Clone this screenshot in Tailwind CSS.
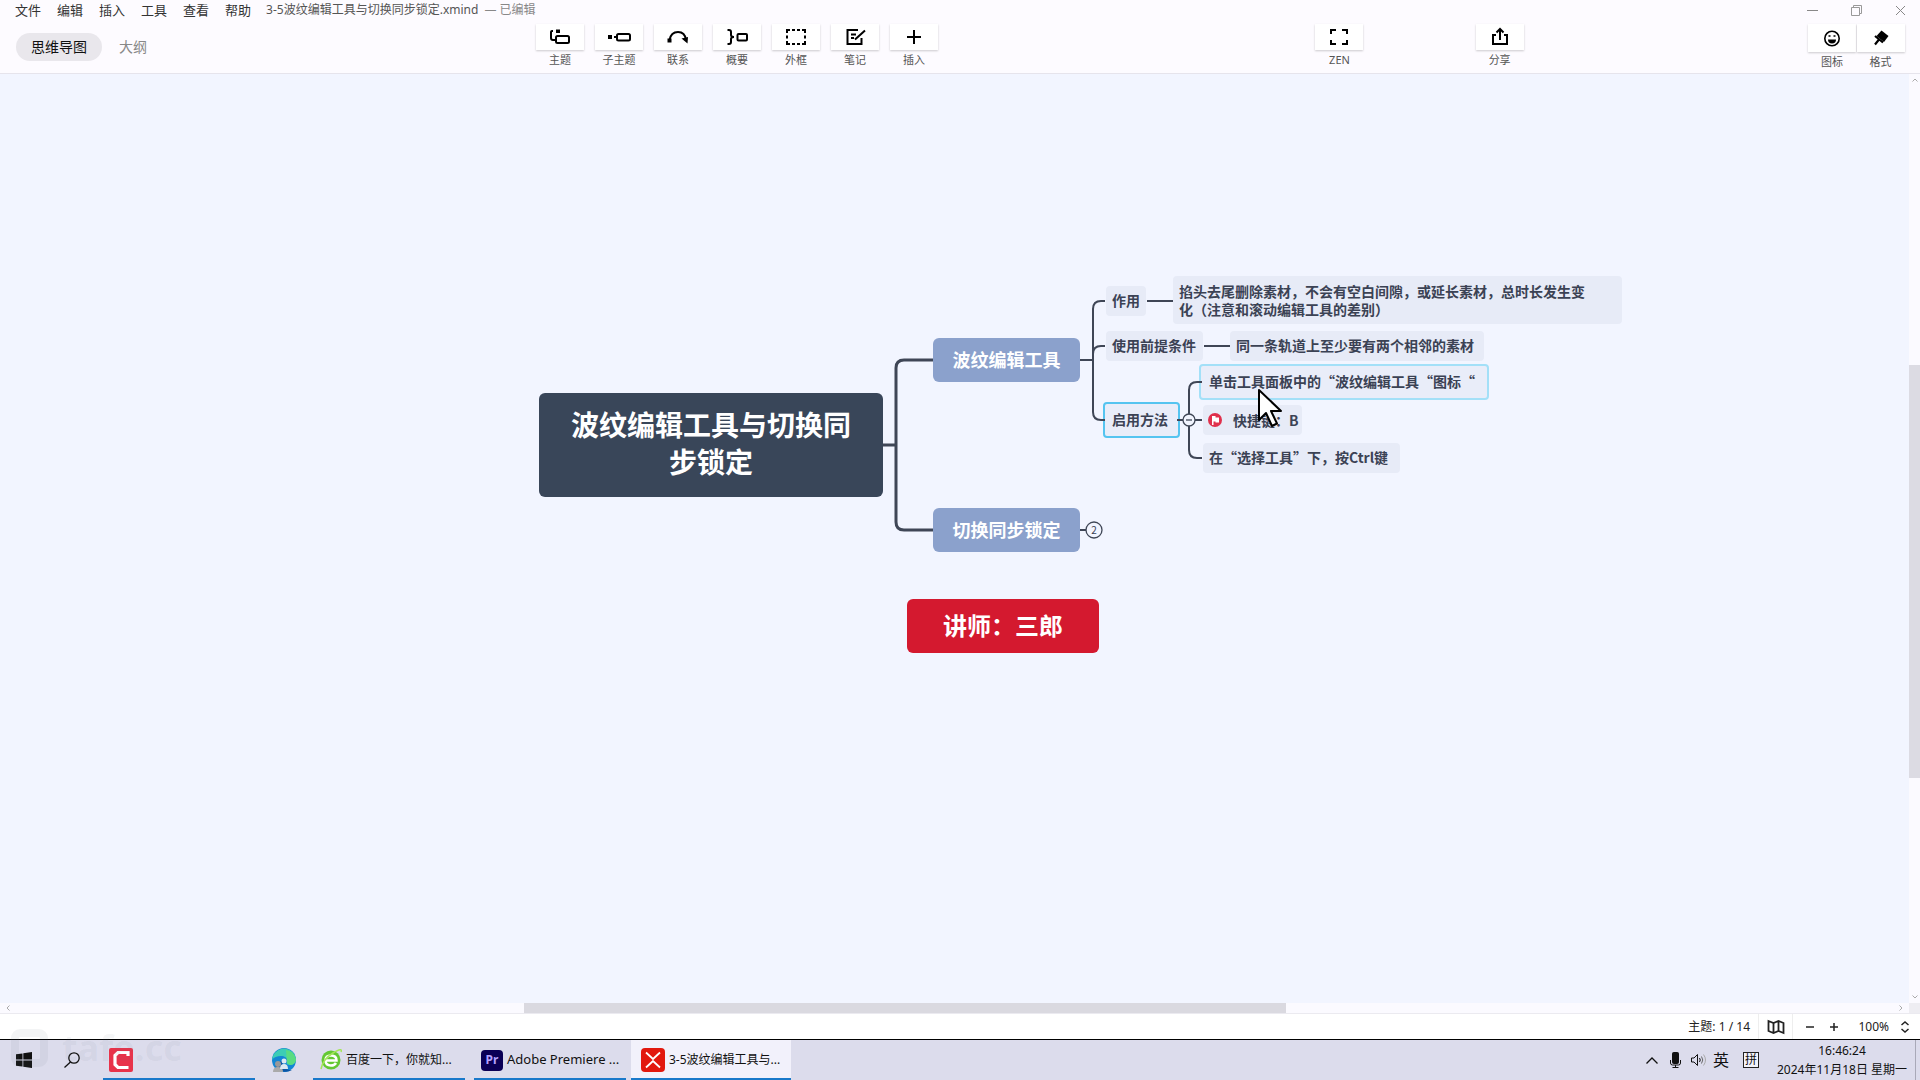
<!DOCTYPE html>
<html lang="zh-CN">
<head>
<meta charset="utf-8">
<title>3-5波纹编辑工具与切换同步锁定.xmind</title>
<script src="https://cdn.jsdelivr.net/npm/@tailwindcss/browser@4"></script>
</head>
<body class="flex h-screen flex-col overflow-hidden bg-white font-['Noto_Sans','Noto_Sans_CJK_SC',sans-serif] text-[#222] select-none">

<!-- Title bar and toolbar -->
<header class="flex h-[74px] shrink-0 flex-col border-b border-[#e6e4ec] bg-[#fdfbff]">
  <div class="flex h-5 items-center pr-[14px] pl-[15px]">
    <nav class="flex gap-4 text-[13px] leading-5 text-[#333]">
      <button>文件</button><button>编辑</button><button>插入</button><button>工具</button><button>查看</button><button>帮助</button>
    </nav>
    <h1 class="ml-[15px] text-xs leading-5 text-[#555]">3-5波纹编辑工具与切换同步锁定.xmind</h1>
    <span class="ml-1.5 text-xs leading-5 text-[#888]">— 已编辑</span>
    <div class="ml-auto flex items-center gap-[33px]">
      <button aria-label="最小化"><svg class="size-[11px]" viewBox="0 0 11 11" stroke="#888" fill="none"><path d="M0 5.500h11"/></svg></button>
      <button aria-label="还原"><svg class="size-[11px]" viewBox="0 0 11 11" stroke="#999" fill="none"><path d="M.5 2.500h8v8h-8zM2.500 2.500v-2h8v8h-2"/></svg></button>
      <button aria-label="关闭"><svg class="size-[11px]" viewBox="0 0 11 11" stroke="#888" fill="none"><path d="M1 1l9 9M10 1l-9 9"/></svg></button>
    </div>
  </div>
  <div class="flex flex-1 items-start pt-1 pr-[15px]">
    <div class="flex w-[536px] shrink-0 items-center gap-[17px] pt-[9px] pl-4 text-sm leading-7">
      <button class="rounded-full bg-[#e9e7ec] px-[15px] text-[#111]">思维导图</button>
      <button class="text-[#888]">大纲</button>
    </div>
    <div class="flex gap-[11px] text-[11px] leading-5 text-[#555]">
      <button class="w-12"><span class="flex h-[26px] items-center justify-center bg-white shadow-[0_1px_2px_rgba(0,0,0,0.2)]"><svg class="h-5 w-6" viewBox="0 0 24 20" fill="none" stroke="#000" stroke-width="2"><path d="M5 4H4Q3 4 3 5v6q0 2 2 2h3"/><rect x="8" y="9" width="13" height="7" rx="1.500"/><path d="M8 2.500h4v3.500h-4z" fill="#000" stroke="none"/></svg></span>主题</button>
      <button class="w-12"><span class="flex h-[26px] items-center justify-center bg-white shadow-[0_1px_2px_rgba(0,0,0,0.2)]"><svg class="h-5 w-6" viewBox="0 0 24 20" fill="none" stroke="#000" stroke-width="2"><path d="M1 8h4v4H1z" fill="#000" stroke="none"/><path d="M7 10h3"/><rect x="10" y="7" width="13" height="6.500" rx="1.500"/></svg></span>子主题</button>
      <button class="w-12"><span class="flex h-[26px] items-center justify-center bg-white shadow-[0_1px_2px_rgba(0,0,0,0.2)]"><svg class="h-5 w-6" viewBox="0 0 24 20" fill="none" stroke="#000" stroke-width="2"><path d="M3.500 13Q5 5 12 5t8 8"/><path d="M1.500 11.500h4v4h-4zM15.500 11.500L22 10l-.5 6.500z" fill="#000" stroke="none"/></svg></span>联系</button>
      <button class="w-12"><span class="flex h-[26px] items-center justify-center bg-white shadow-[0_1px_2px_rgba(0,0,0,0.2)]"><svg class="h-5 w-6" viewBox="0 0 24 20" fill="none" stroke="#000" stroke-width="2"><path d="M2.500 3H4q2 0 2 2v3q0 2 3 2-3 0-3 2v3q0 2-2 2H2.500"/><rect x="12.500" y="7" width="9.500" height="6.500" rx="1"/></svg></span>概要</button>
      <button class="w-12"><span class="flex h-[26px] items-center justify-center bg-white shadow-[0_1px_2px_rgba(0,0,0,0.2)]"><svg class="h-5 w-6" viewBox="0 0 24 20" fill="none" stroke="#000" stroke-width="2"><path d="M3 6V3h3M8 3h3M13 3h3M18 3h3v3M21 8.500v3M21 14v3h-3M16 17h-3M11 17H8M6 17H3v-3M3 11.500v-3"/></svg></span>外框</button>
      <button class="w-12"><span class="flex h-[26px] items-center justify-center bg-white shadow-[0_1px_2px_rgba(0,0,0,0.2)]"><svg class="h-5 w-6" viewBox="0 0 24 20" fill="none" stroke="#000" stroke-width="2"><path d="M15 3H4.500v14h14v-6M8 7.500h5M8 11h3M12 12.500L22 3.500"/></svg></span>笔记</button>
      <button class="w-12"><span class="flex h-[26px] items-center justify-center bg-white shadow-[0_1px_2px_rgba(0,0,0,0.2)]"><svg class="h-5 w-6" viewBox="0 0 24 20" fill="none" stroke="#000" stroke-width="2"><path d="M12 3v14M5 10h14"/></svg></span>插入</button>
    </div>
    <div class="grow-[377]"></div>
    <button class="w-12 text-[11px] leading-5 text-[#555]"><span class="flex h-[26px] items-center justify-center bg-white shadow-[0_1px_2px_rgba(0,0,0,0.2)]"><svg class="h-5 w-6" viewBox="0 0 24 20" fill="none" stroke="#000" stroke-width="2"><path d="M4 7V3h5M15 3h5v4M20 13v4h-5M9 17H4v-4"/></svg></span>ZEN</button>
    <div class="grow-[112]"></div>
    <button class="w-12 text-[11px] leading-5 text-[#555]"><span class="flex h-[26px] items-center justify-center bg-white shadow-[0_1px_2px_rgba(0,0,0,0.2)]"><svg class="h-5 w-6" viewBox="0 0 24 20" fill="none" stroke="#000" stroke-width="2"><path d="M8 8H5v9h14V8h-3M12 13V2.500M8.500 5.500L12 2l3.500 3.500"/></svg></span>分享</button>
    <div class="grow-[284]"></div>
    <div class="flex text-[11px] leading-5 text-[#555]">
      <button class="w-12"><span class="flex h-7 items-center justify-center bg-white shadow-[0_1px_2px_rgba(0,0,0,0.2)]"><svg class="size-[18px]" viewBox="0 0 18 18" fill="none" stroke="#000" stroke-width="1.600"><circle cx="9" cy="9.500" r="7.200"/><path d="M5 10.500h8a4 4 0 0 1-8 0z" fill="#000" stroke="none"/><path d="M5.500 7h2M10.500 7h2"/></svg></span>图标</button>
      <button class="w-[49px]"><span class="ml-px flex h-7 items-center justify-center bg-white shadow-[0_1px_2px_rgba(0,0,0,0.2)]"><svg class="size-[18px]" viewBox="0 0 18 18"><path d="M9.500 1.500l7 5.500-4.500 6-7.500-6z"/><path d="M3 7l8 6.500M7 10.500L3 15.500" stroke="#000" stroke-width="2.200" fill="none"/></svg></span>格式</button>
    </div>
  </div>
</header>

<!-- Map canvas with its scroll bars -->
<main class="flex min-h-0 flex-1 flex-col">
  <div class="flex min-h-0 flex-1">
    <div class="relative min-w-0 flex-1 overflow-hidden bg-[#f2f5ff] font-['Noto_Sans_CJK_SC',sans-serif] text-sm leading-[18px] font-bold whitespace-nowrap text-[#3b4254]">
      <div class="absolute top-[319px] left-[539px] flex h-[104px] w-[344px] items-center justify-center rounded-md bg-[#394659] pb-1 text-center text-[28px] leading-[37px] text-white">波纹编辑工具与切换同<br>步锁定</div>
      <div class="absolute top-[264px] left-[933px] flex h-11 w-[147px] items-center justify-center rounded-md bg-[#8ba1cc] pb-0.5 text-lg text-white">波纹编辑工具</div>
      <div class="absolute top-[434px] left-[933px] flex h-11 w-[147px] items-center justify-center rounded-md bg-[#8ba1cc] pb-0.5 text-lg text-white">切换同步锁定</div>
      <div class="absolute top-[525px] left-[907px] flex h-[54px] w-[192px] items-center justify-center rounded-md bg-[#d4192f] pb-0.5 text-2xl text-white">讲师：三郎</div>

      <div class="absolute top-[212px] left-[1106px] flex h-[30px] w-10 items-center rounded-sm bg-[#e7ebf7] pb-0.5 pl-1.5">作用</div>
      <div class="absolute top-[202px] left-[1173px] flex h-[48px] w-[449px] items-center rounded-sm bg-[#e7ebf7] pl-1.5">掐头去尾删除素材，不会有空白间隙，或延长素材，总时长发生变<br>化（注意和滚动编辑工具的差别）</div>
      <div class="absolute top-[257px] left-[1106px] flex h-[30px] w-[97px] items-center rounded-sm bg-[#e7ebf7] pb-0.5 pl-1.5">使用前提条件</div>
      <div class="absolute top-[257px] left-[1230px] flex h-[30px] w-[254px] items-center rounded-sm bg-[#e7ebf7] pb-0.5 pl-1.5">同一条轨道上至少要有两个相邻的素材</div>
      <div class="absolute top-[290px] left-[1199px] flex h-9 w-[290px] items-center rounded-sm border-2 border-[#a3e0f8] bg-[#e9edf9] pb-0.5 pl-2">单击工具面板中的“波纹编辑工具“图标“</div>
      <div class="absolute top-[328px] left-[1103px] flex h-9 w-[77px] items-center rounded-sm border-2 border-[#55c4f0] bg-[#e9edf9] pb-0.5 pl-[7px]">启用方法</div>
      <div class="absolute top-[331px] left-[1203px] flex h-[30px] w-[99px] items-center gap-[11px] rounded-sm bg-[#e7ebf7] pl-[5px]">
        <svg class="size-[14px]" viewBox="0 0 14 14"><circle cx="7" cy="7" r="7" fill="#e0304c"/><path d="M4 3h3.500v1.500H11v5H7.500V8.500H5.500V12H4z" fill="#fff"/></svg>快捷键：B</div>
      <div class="absolute top-[369px] left-[1203px] flex h-[30px] w-[197px] items-center rounded-sm bg-[#e7ebf7] pb-0.5 pl-1.5">在“选择工具”下，按Ctrl键</div>

      <!-- Branch lines -->
      <svg class="absolute top-0 left-0 h-[600px] w-[1600px]" fill="none" stroke="#3f4656" stroke-width="2">
        <path stroke-width="3" d="M883 371h13M933 286h-29q-8 0-8 8v154q0 8 8 8h29"/>
        <path d="M1080 286h13M1105 227h-4q-8 0-8 8v103q0 8 8 8h4M1105 272h-4q-8 0-8 8M1147 227h26M1204 272h26M1177 346h25M1202 308h-5q-8 0-8 8v60q0 8 8 8h5M1080 456h8"/>
        <circle cx="1189" cy="346" r="6" fill="#f2f5ff" stroke-width="1.300"/><path d="M1186 346h6" stroke-width="1.300"/>
        <circle cx="1094" cy="456" r="8" fill="#f2f5ff" stroke-width="1.300"/>
      </svg>
      <span class="absolute top-[447px] left-[1086px] w-4 text-center text-[10px] font-normal">2</span>

      <svg class="absolute top-[314px] left-[1257px] h-10 w-[27px]" viewBox="0 0 27 40"><path d="M2 2v30l7-7 6 13 5-2.500-6-12.500h10z" fill="#fff" stroke="#000" stroke-width="2" stroke-linejoin="round"/></svg>
    </div>
    <div class="flex w-[11px] flex-col items-center justify-between bg-[#fbfaff] py-1">
      <svg class="h-1 w-1.5" viewBox="0 0 6 4" fill="none" stroke="#aaa"><path d="M.5 3.500L3 1l2.500 2.500"/></svg>
      <div class="h-[413px] w-full translate-y-[33px] bg-[#dcdbe3]"></div>
      <svg class="h-1 w-1.5" viewBox="0 0 6 4" fill="none" stroke="#aaa"><path d="M.5.500L3 3 5.500.500"/></svg>
    </div>
  </div>
  <div class="flex h-[11px] shrink-0 border-b border-[#ebeaf0] bg-[#fbfaff]">
    <div class="flex flex-1 items-center justify-between px-1.5">
      <svg class="h-1.5 w-1" viewBox="0 0 4 6" fill="none" stroke="#aaa"><path d="M3.500.500L1 3l2.500 2.500"/></svg>
      <div class="h-full w-[762px] -translate-x-[50px] bg-[#dad9e0]"></div>
      <svg class="h-1.5 w-1" viewBox="0 0 4 6" fill="none" stroke="#aaa"><path d="M.5.500L3 3 .5 5.500"/></svg>
    </div>
    <div class="w-[11px] bg-[#eeedf2]"></div>
  </div>
</main>

<!-- Status bar -->
<footer class="flex h-[26px] shrink-0 items-center justify-end border-b border-black bg-white pr-[11px] text-xs text-[#222]">
  <span class="mr-2">主题: 1 / 14</span>
  <button aria-label="导航图" class="flex h-full w-[35px] items-center justify-center border-x border-[#eee]"><svg class="h-4 w-[18px]" viewBox="0 0 18 16" fill="none" stroke="#222" stroke-width="1.800"><path d="M1.500 2l5 2 5-2 5 2v10l-5-2-5 2-5-2zM6.500 4v10M11.500 2v10"/></svg></button>
  <button aria-label="缩小" class="ml-3"><svg class="size-[10px]" viewBox="0 0 10 10" stroke="#222" stroke-width="1.500"><path d="M1 5h8"/></svg></button>
  <button aria-label="放大" class="ml-3.5"><svg class="size-[10px]" viewBox="0 0 10 10" stroke="#222" stroke-width="1.500"><path d="M1 5h8M5 1v8"/></svg></button>
  <span class="w-[50px] text-right">100%</span>
  <button aria-label="缩放比例" class="ml-3"><svg class="h-3 w-2" viewBox="0 0 8 12" fill="none" stroke="#222" stroke-width="1.500"><path d="M.5 4L4 1l3.500 3M.5 8L4 11l3.500-3"/></svg></button>
</footer>

<!-- Taskbar -->
<div class="relative flex h-10 shrink-0 bg-[#dcdcec] pl-1 text-xs text-[#111]">
  <button aria-label="开始" class="flex w-10 items-center justify-center"><svg class="size-4" viewBox="0 0 16 16" fill="#111"><path d="M0 2.300L6.500 1.400V7.600H0zM7.300 1.300L16 0v7.600H7.300zM0 8.400h6.500v6.200L0 13.700zM7.300 8.400H16V16l-8.700-1.300z"/></svg></button>
  <button aria-label="搜索" class="flex w-14 items-center justify-center"><svg class="size-4" viewBox="0 0 16 16" fill="none" stroke="#111" stroke-width="1.300"><circle cx="10" cy="6" r="5.200"/><path d="M6.500 10L.5 15.500"/></svg></button>
  <button aria-label="Camtasia" class="ml-[3px] flex w-[152px] items-center border-b-2 border-[#1979ca] pt-0.5 pl-1.5"><svg class="size-6" viewBox="0 0 24 24"><rect width="24" height="24" rx="2" fill="#e8334a"/><path d="M19 8V4.500H9L6 7.500v9l3 3h10.500" fill="none" stroke="#fff" stroke-width="3.200"/></svg></button>
  <button aria-label="Edge" class="flex w-[58px] items-center justify-center"><svg class="size-6" viewBox="0 0 24 24"><circle cx="12" cy="12" r="12" fill="#1386d3"/><path d="M1 8A12 12 0 0 1 24 11c0 4-3 6-6 6-3 0-4-1-3-3 1-4-2-6-6-6-4 0-7 1-9 4z" fill="#3ccdb5"/><path d="M14 2a12 12 0 0 1 10 9c0 4-3 6-6 6l-3-2z" fill="#66e36a" opacity=".7"/><path d="M3 17a12 12 0 0 0 17 5c-7 0-10-4-9-10z" fill="#0c55a5"/><circle cx="6" cy="16" r="3" fill="#999"/><path d="M1 24q0-5 5-5t5 5z" fill="#aaa"/><circle cx="12" cy="13" r="2.500" fill="#dce8f2"/><path d="M8 21q0-5 4-5t4 5z" fill="#dce8f2"/></svg></button>
  <button class="flex w-[152px] items-center border-b-2 border-[#1979ca] pt-0.5 pl-[7px]"><svg class="mr-1 size-[22px]" viewBox="0 0 22 22"><circle cx="11" cy="11" r="9.500" fill="#64c832"/><path d="M5.500 11.500h11q0-5-5.500-5t-5.500 5q0 5 5.500 5 3.500 0 5-2.500" fill="none" stroke="#fff" stroke-width="2.500"/><path d="M1 20Q3 10 13 4t8-1" fill="none" stroke="#a5e65a" stroke-width="1.500"/></svg>百度一下，你就知...</button>
  <button class="ml-[9px] flex w-[152px] items-center border-b-2 border-[#1979ca] pt-0.5 pl-[7px] text-[13px]"><span class="mr-1 flex h-[21px] w-[22px] items-center justify-center rounded-sm bg-[#0b0056] text-xs font-bold text-[#b3a0ff]">Pr</span>Adobe Premiere ...</button>
  <button class="ml-[5px] flex w-[160px] items-center border-b-2 border-[#1979ca] bg-[#f2f1fb] pt-0.5 pl-2.5"><svg class="mr-1 size-6" viewBox="0 0 24 24"><rect width="24" height="24" rx="4" fill="#e2180e"/><path d="M5 4.500l7 6.500 7-6.500M5 19.500l7-6.500 7 6.500" fill="none" stroke="#fff" stroke-width="1.800"/></svg>3-5波纹编辑工具与...</button>

  <div class="ml-auto flex items-center">
    <button aria-label="隐藏的图标" class="mr-3"><svg class="h-[7px] w-3" viewBox="0 0 12 7" fill="none" stroke="#111" stroke-width="1.300"><path d="M.5 6.500L6 1l5.500 5.500"/></svg></button>
    <button aria-label="麦克风" class="mr-2.5"><svg class="h-4 w-[11px]" viewBox="0 0 11 16" fill="none" stroke="#111"><rect x="2.500" y=".5" width="6" height="11" rx="1" fill="#111"/><path d="M.5 8v3q0 2 2 2h6q2 0 2-2V8M5.500 13v2.500M2.500 15.500h6"/></svg></button>
    <button aria-label="音量" class="mr-1.5"><svg class="h-3.5 w-4" viewBox="0 0 16 14" fill="none" stroke="#111"><path d="M.5 5v4h2.500l3.500 3.500v-11L3 5zM8.500 5q1.500 2 0 4"/><path d="M10.500 3.500q2.500 3.500 0 7" stroke="#666"/><path d="M12.500 1.500q4 5.500 0 11" stroke="#aaa"/></svg></button>
    <button class="mr-[14px] text-base leading-5">英</button>
    <button class="mr-4 flex size-4 items-center justify-center border border-[#222] bg-[#f4f4fb] text-xs">拼</button>
    <div class="mr-1.5 flex w-[134px] flex-col text-center leading-[19px]"><time>16:46:24</time><span>2024年11月18日 星期一</span></div>
    <button aria-label="显示桌面" class="h-full w-[5px] border-l border-[#a9a9b8]"></button>
  </div>

  <!-- Faint watermark over the status bar and taskbar -->
  <div class="pointer-events-none absolute -top-3 left-[11px] flex items-center gap-3.5 text-4xl leading-[40px] font-bold text-gray-500/8">
    <svg class="h-[38px] w-[37px]" viewBox="0 0 37 38" fill="none" stroke="currentColor" stroke-width="8"><rect x="4" y="4" width="29" height="30" rx="5"/></svg>tafe.cc</div>
</div>
</body>
</html>
